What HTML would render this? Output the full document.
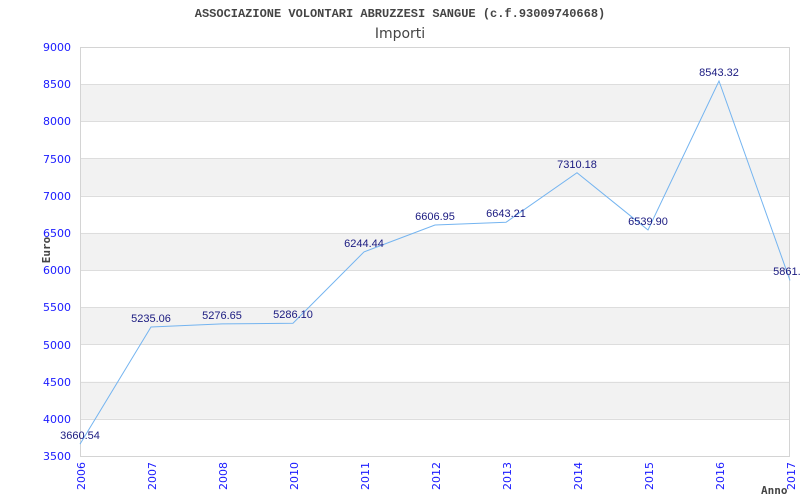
<!DOCTYPE html>
<html><head><meta charset="utf-8"><style>
html,body{margin:0;padding:0;background:#fff;width:800px;height:500px;overflow:hidden}
svg{display:block}
</style></head><body>
<svg width="800" height="500" xmlns="http://www.w3.org/2000/svg">
<text x="400" y="17" text-anchor="middle" font-family="Liberation Mono, monospace" font-weight="bold" font-size="12" fill="#444">ASSOCIAZIONE VOLONTARI ABRUZZESI SANGUE (c.f.93009740668)</text>
<text x="400" y="38" text-anchor="middle" font-family="DejaVu Sans, sans-serif" font-size="14" fill="#444">Importi</text>
<g fill="#f2f2f2">
<rect x="80" y="84.2" width="710" height="37.2"/>
<rect x="80" y="158.6" width="710" height="37.2"/>
<rect x="80" y="232.9" width="710" height="37.2"/>
<rect x="80" y="307.3" width="710" height="37.2"/>
<rect x="80" y="381.6" width="710" height="37.2"/>
</g>
<g stroke="#ddd" stroke-width="1">
<line x1="80" x2="790" y1="84.5" y2="84.5"/><line x1="80" x2="790" y1="121.5" y2="121.5"/>
<line x1="80" x2="790" y1="158.5" y2="158.5"/><line x1="80" x2="790" y1="196.5" y2="196.5"/>
<line x1="80" x2="790" y1="233.5" y2="233.5"/><line x1="80" x2="790" y1="270.5" y2="270.5"/>
<line x1="80" x2="790" y1="307.5" y2="307.5"/><line x1="80" x2="790" y1="344.5" y2="344.5"/>
<line x1="80" x2="790" y1="382.5" y2="382.5"/><line x1="80" x2="790" y1="419.5" y2="419.5"/>
</g>
<rect x="80.5" y="47.5" width="709" height="409" fill="none" stroke="#d4d4d4"/>
<g font-family="DejaVu Sans, sans-serif" font-size="11" fill="#1a1aff" text-anchor="end">
<text x="71" y="51">9000</text><text x="71" y="88">8500</text><text x="71" y="125">8000</text>
<text x="71" y="163">7500</text><text x="71" y="200">7000</text><text x="71" y="237">6500</text>
<text x="71" y="274">6000</text><text x="71" y="311">5500</text><text x="71" y="349">5000</text>
<text x="71" y="386">4500</text><text x="71" y="423">4000</text><text x="71" y="460">3500</text>
</g>
<g font-family="DejaVu Sans, sans-serif" font-size="11" fill="#1a1aff" text-anchor="end">
<text transform="translate(85,462) rotate(-90)">2006</text>
<text transform="translate(156,462) rotate(-90)">2007</text>
<text transform="translate(227,462) rotate(-90)">2008</text>
<text transform="translate(298,462) rotate(-90)">2010</text>
<text transform="translate(369,462) rotate(-90)">2011</text>
<text transform="translate(440,462) rotate(-90)">2012</text>
<text transform="translate(511,462) rotate(-90)">2013</text>
<text transform="translate(582,462) rotate(-90)">2014</text>
<text transform="translate(653,462) rotate(-90)">2015</text>
<text transform="translate(724,462) rotate(-90)">2016</text>
<text transform="translate(795,462) rotate(-90)">2017</text>
</g>
<text transform="translate(50,250) rotate(-90)" text-anchor="middle" font-family="DejaVu Sans Mono, monospace" font-weight="bold" font-size="11" fill="#444">Euro</text>
<text x="761" y="494" font-family="DejaVu Sans Mono, monospace" font-weight="bold" font-size="11" fill="#444">Anno</text>
<polyline fill="none" stroke="#74b4f0" stroke-width="1" points="80,444.1 151,327 222,323.9 293,323.2 364,251.9 435,225 506,222.3 577,172.7 648,230 719,81 790,280.4"/>
<g font-family="Liberation Sans, sans-serif" font-size="11" fill="#1a1a80" text-anchor="middle">
<text x="80" y="439">3660.54</text>
<text x="151" y="322">5235.06</text>
<text x="222" y="319">5276.65</text>
<text x="293" y="318">5286.10</text>
<text x="364" y="247">6244.44</text>
<text x="435" y="220">6606.95</text>
<text x="506" y="217">6643.21</text>
<text x="577" y="168">7310.18</text>
<text x="648" y="225">6539.90</text>
<text x="719" y="76">8543.32</text>
<text x="790" y="275">5861.7</text>
</g>
</svg>
</body></html>
